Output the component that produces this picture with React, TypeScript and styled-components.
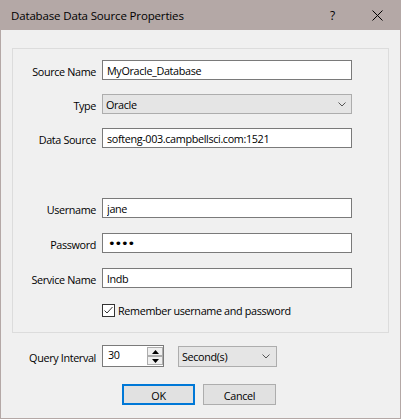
import React from "react";
import styled, { createGlobalStyle } from "styled-components";

const GlobalStyle = createGlobalStyle`
  html, body { margin: 0; padding: 0; background: #f0f0f0; }
  * { box-sizing: border-box; }
`;

const FONT = `"Open Sans", "Noto Sans", sans-serif`;

const Window = styled.div`
  width: 401px;
  height: 419px;
  border: 1px solid #b4a8a6;
  border-top: 0;
  background: #f0f0f0;
  display: flex;
  flex-direction: column;
  font-family: ${FONT};
  font-size: 10.8px;
  letter-spacing: -0.35px;
  color: #000;
`;

const TitleBar = styled.div`
  height: 30px;
  flex: none;
  background: #b4a8a6;
  display: flex;
  align-items: center;
  padding-left: 10px;
`;

const TitleText = styled.div`
  flex: 1;
  font-size: 11.5px;
  letter-spacing: -0.15px;
  padding-top: 1px;
`;

const CaptionButton = styled.div`
  width: 45px;
  height: 30px;
  display: flex;
  align-items: center;
  justify-content: center;
  font-size: 12px;
`;

const Body = styled.div`
  padding: 18px 11px 0 11px;
  display: flex;
  flex-direction: column;
`;

const GroupBox = styled.div`
  height: 285px;
  border: 1px solid #dcdcdc;
  padding-top: 11px;
  display: flex;
  flex-direction: column;
`;

const FieldRow = styled.div<{ $top?: number }>`
  display: grid;
  grid-template-columns: 83px auto;
  column-gap: 6px;
  align-items: center;
  margin-top: ${(p) => p.$top ?? 0}px;
`;

const Label = styled.label`
  text-align: right;
  white-space: nowrap;
  padding-top: 2px;
`;

const TextBox = styled.input`
  width: 250px;
  height: 20px;
  border: 1px solid #7a7a7a;
  background: #fff;
  padding: 1px 4px 0 4px;
  margin: 0;
  font-family: ${FONT};
  font-size: 10.8px;
  letter-spacing: -0.35px;
  color: #000;
  outline: none;
`;

const PasswordBox = styled(TextBox)`
  font-family: "DejaVu Sans", sans-serif;
  font-size: 13px;
  letter-spacing: -1.2px;
  padding-left: 5px;
`;

const Combo = styled.div<{ $width: number; $height: number }>`
  width: ${(p) => p.$width}px;
  height: ${(p) => p.$height}px;
  border: 1px solid #adadad;
  background: #e5e5e5;
  display: flex;
  align-items: center;
  padding: 1px 0 0 3px;
`;

const ComboText = styled.span`
  flex: 1;
`;

const Chevron = styled.svg<{ $right: number }>`
  width: 8px;
  height: 5px;
  margin-right: ${(p) => p.$right}px;
`;

const CheckRow = styled.div`
  margin-top: 14px;
  margin-left: 89px;
  display: flex;
  align-items: center;
`;

const CheckBox = styled.span`
  width: 13px;
  height: 13px;
  border: 1px solid #333;
  background: #fff;
  display: flex;
  align-items: center;
  justify-content: center;
`;

const CheckLabel = styled.span`
  margin-left: 3px;
  padding-top: 1px;
`;

const QueryRow = styled.div`
  margin-top: 12px;
  display: flex;
  align-items: center;
`;

const QueryLabel = styled.span`
  width: 84px;
  text-align: right;
  margin-right: 6px;
  padding-top: 2px;
`;

const Spin = styled.div`
  width: 62px;
  height: 22px;
  border: 1px solid #7a7a7a;
  background: #fff;
  display: flex;
  margin-right: 14px;
`;

const SpinValue = styled.span`
  flex: 1;
  padding: 0 0 0 5px;
  line-height: 17px;
`;

const SpinButtons = styled.div`
  width: 16px;
  display: flex;
  flex-direction: column;
  justify-content: space-between;
  padding: 1px 0;
`;

const SpinButton = styled.div`
  height: 9px;
  border: 1px solid #adadad;
  background: #f0f0f0;
  display: flex;
  align-items: center;
  justify-content: center;
`;

const ButtonRow = styled.div`
  margin-top: 17px;
  padding-left: 110px;
  display: flex;
  gap: 8px;
`;

const Button = styled.button<{ $default?: boolean }>`
  width: 73px;
  height: 21px;
  margin: 0;
  padding: 1px 0 0 0;
  background: #e1e1e1;
  border: ${(p) => (p.$default ? "2px solid #0078d7" : "1px solid #adadad")};
  font-family: ${FONT};
  font-size: 10.8px;
  letter-spacing: -0.35px;
  color: #000;
`;

function ChevronIcon({ right }: { right: number }) {
  return (
    <Chevron $right={right} viewBox="0 0 8 5">
      <polyline points="0.5,0.5 4,4 7.5,0.5" fill="none" stroke="#555" strokeWidth="1" />
    </Chevron>
  );
}

export default function App() {
  return (
    <>
      <GlobalStyle />
      <Window>
        <TitleBar>
          <TitleText>Database Data Source Properties</TitleText>
          <CaptionButton>?</CaptionButton>
          <CaptionButton>
            <svg width="11" height="11" viewBox="0 0 11 11">
              <path d="M0.5 0.5 L10.5 10.5 M10.5 0.5 L0.5 10.5" stroke="#000" strokeWidth="1" fill="none" />
            </svg>
          </CaptionButton>
        </TitleBar>
        <Body>
          <GroupBox>
            <FieldRow>
              <Label>Source Name</Label>
              <TextBox defaultValue="MyOracle_Database" />
            </FieldRow>
            <FieldRow $top={14}>
              <Label>Type</Label>
              <Combo $width={250} $height={20}>
                <ComboText>Oracle</ComboText>
                <ChevronIcon right={5} />
              </Combo>
            </FieldRow>
            <FieldRow $top={14}>
              <Label>Data Source</Label>
              <TextBox defaultValue="softeng-003.campbellsci.com:1521" />
            </FieldRow>
            <FieldRow $top={50}>
              <Label>Username</Label>
              <TextBox defaultValue="jane" />
            </FieldRow>
            <FieldRow $top={15}>
              <Label>Password</Label>
              <PasswordBox type="password" defaultValue="jane" />
            </FieldRow>
            <FieldRow $top={15}>
              <Label>Service Name</Label>
              <TextBox defaultValue="lndb" />
            </FieldRow>
            <CheckRow>
              <CheckBox>
                <svg width="11" height="11" viewBox="0 0 11 11">
                  <polyline points="1.5,5.5 4,8 9.5,2" fill="none" stroke="#333" strokeWidth="1" />
                </svg>
              </CheckBox>
              <CheckLabel>Remember username and password</CheckLabel>
            </CheckRow>
          </GroupBox>
          <QueryRow>
            <QueryLabel>Query Interval</QueryLabel>
            <Spin>
              <SpinValue>30</SpinValue>
              <SpinButtons>
                <SpinButton>
                  <svg width="7" height="4" viewBox="0 0 7 4">
                    <polygon points="0,4 3.5,0 7,4" fill="#000" />
                  </svg>
                </SpinButton>
                <SpinButton>
                  <svg width="7" height="4" viewBox="0 0 7 4">
                    <polygon points="0,0 3.5,4 7,0" fill="#000" />
                  </svg>
                </SpinButton>
              </SpinButtons>
            </Spin>
            <Combo $width={99} $height={21}>
              <ComboText>Second(s)</ComboText>
              <ChevronIcon right={6} />
            </Combo>
          </QueryRow>
          <ButtonRow>
            <Button $default>OK</Button>
            <Button>Cancel</Button>
          </ButtonRow>
        </Body>
      </Window>
    </>
  );
}
